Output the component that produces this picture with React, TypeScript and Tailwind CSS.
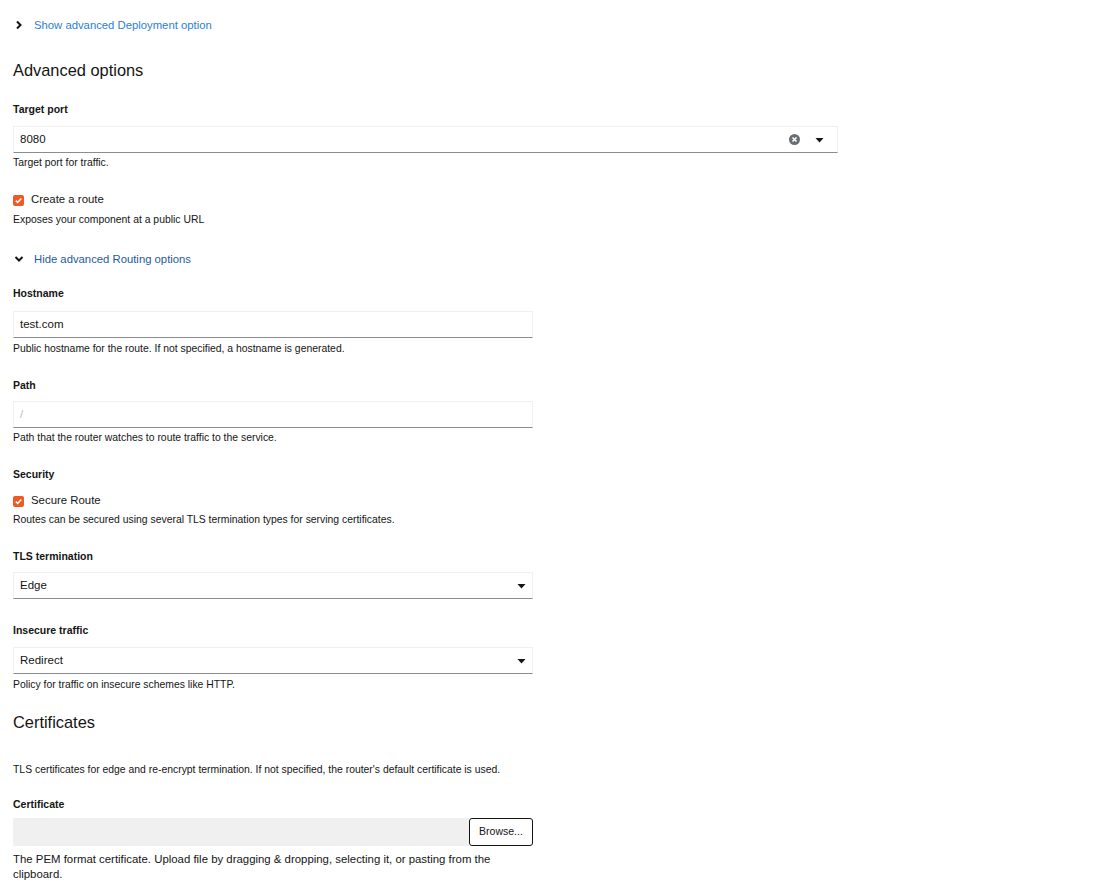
import React from "react";

const font = { fontFamily: '"Liberation Sans", Arial, sans-serif' };

function ChevronRight() {
  return (
    <svg width="8" height="10" viewBox="0 0 8 10" className="shrink-0">
      <path d="M2 1.5 L5.5 5 L2 8.5" fill="none" stroke="#151515" strokeWidth="2" />
    </svg>
  );
}

function ChevronDown() {
  return (
    <svg width="10" height="8" viewBox="0 0 10 8" className="shrink-0">
      <path d="M1.5 2 L5 5.5 L8.5 2" fill="none" stroke="#151515" strokeWidth="2" />
    </svg>
  );
}

function Caret() {
  return (
    <svg width="9" height="6" viewBox="0 0 9 6">
      <path d="M0.5 1 H8.5 L4.5 5.5 Z" fill="#151515" />
    </svg>
  );
}

function Checkbox() {
  return (
    <span className="flex h-[11px] w-[11px] items-center justify-center rounded-[2px] bg-[#ee5a24]">
      <svg width="9" height="9" viewBox="0 0 9 9">
        <path d="M1.8 4.6 L3.7 6.5 L7.3 2.4" fill="none" stroke="#fff" strokeWidth="1.5" />
      </svg>
    </span>
  );
}

function Label({ children, className = "" }: { children: React.ReactNode; className?: string }) {
  return <div className={`h-4 text-[10.5px] font-bold leading-4 text-[#151515] ${className}`}>{children}</div>;
}

function Helper({ children, className = "" }: { children: React.ReactNode; className?: string }) {
  return <div className={`h-4 text-[10.4px] leading-4 text-[#151515] ${className}`}>{children}</div>;
}

function TextBox({
  value,
  placeholder,
  width = "w-[520px]",
  className = "",
  pr = "pr-[6px]",
  right,
}: {
  value?: string;
  placeholder?: string;
  width?: string;
  className?: string;
  pr?: string;
  right?: React.ReactNode;
}) {
  return (
    <div
      className={`flex h-[27px] ${width} items-center border border-[#f0f0f0] border-b-[#8a8d90] bg-white pl-[6px] ${pr} text-[11.5px] ${className}`}
    >
      <span className={`flex-1 ${value ? "text-[#151515]" : "text-[#b8bbbe]"}`}>{value ?? placeholder}</span>
      {right}
    </div>
  );
}

export default function App() {
  return (
    <div className="min-h-screen bg-white pl-[13px] pt-[16px] text-[#151515]" style={font}>
      <div className="flex h-[18px] items-center">
        <span className="flex w-[21px] justify-start pl-[2px]">
          <ChevronRight />
        </span>
        <span className="text-[11.3px] text-[#2b7fd4]">Show advanced Deployment option</span>
      </div>

      <h2 className="mt-[24px] h-6 text-[16.4px] leading-6">Advanced options</h2>

      <Label className="mt-[19px]">Target port</Label>
      <TextBox
        value="8080"
        width="w-[825px]"
        className="mt-[9px]"
        pr="pr-[13px]"
        right={
          <div className="flex items-center gap-[15px]">
            <svg width="11" height="11" viewBox="0 0 11 11">
              <circle cx="5.5" cy="5.5" r="5.5" fill="#6a6e73" />
              <path d="M3.5 3.5 L7.5 7.5 M7.5 3.5 L3.5 7.5" stroke="#fff" strokeWidth="1.6" />
            </svg>
            <Caret />
          </div>
        }
      />
      <Helper className="mt-[2px]">Target port for traffic.</Helper>

      <div className="mt-[20px] flex h-[18px] items-center gap-[7px]">
        <Checkbox />
        <span className="text-[11.4px]">Create a route</span>
      </div>
      <Helper className="mt-[3px]">Exposes your component at a public URL</Helper>

      <div className="mt-[22px] flex h-[18px] items-center">
        <span className="flex w-[21px] pl-[1px]">
          <ChevronDown />
        </span>
        <span className="text-[11.3px] text-[#1f5a9e]">Hide advanced Routing options</span>
      </div>

      <Label className="mt-[17px]">Hostname</Label>
      <TextBox value="test.com" className="mt-[10px]" />
      <Helper className="mt-[3px]">Public hostname for the route. If not specified, a hostname is generated.</Helper>

      <Label className="mt-[20px]">Path</Label>
      <TextBox placeholder="/" className="mt-[8px]" />
      <Helper className="mt-[2px]">Path that the router watches to route traffic to the service.</Helper>

      <Label className="mt-[20px]">Security</Label>
      <div className="mt-[10px] flex h-[18px] items-center gap-[7px]">
        <Checkbox />
        <span className="text-[11.4px]">Secure Route</span>
      </div>
      <Helper className="mt-[2px]">Routes can be secured using several TLS termination types for serving certificates.</Helper>

      <Label className="mt-[20px]">TLS termination</Label>
      <TextBox value="Edge" className="mt-[8px]" right={<Caret />} />

      <Label className="mt-[23px]">Insecure traffic</Label>
      <TextBox value="Redirect" className="mt-[9px]" right={<Caret />} />
      <Helper className="mt-[3px]">Policy for traffic on insecure schemes like HTTP.</Helper>

      <h2 className="mt-[17px] h-6 text-[16.4px] leading-6">Certificates</h2>
      <Helper className="mt-[28px]">
        TLS certificates for edge and re-encrypt termination. If not specified, the router's default certificate is used.
      </Helper>

      <Label className="mt-[18px]">Certificate</Label>
      <div className="mt-[6px] flex h-[28px] w-[520px]">
        <div className="flex-1 bg-[#f0f0f0]" />
        <button className="h-[28px] w-[64px] rounded-[3px] border border-[#151515] bg-white text-[10.5px] text-[#151515]">
          Browse...
        </button>
      </div>
      <div className="mt-[6px] w-[520px] text-[11.4px] leading-[15px]">
        The PEM format certificate. Upload file by dragging &amp; dropping, selecting it, or pasting from the clipboard.
      </div>
    </div>
  );
}
